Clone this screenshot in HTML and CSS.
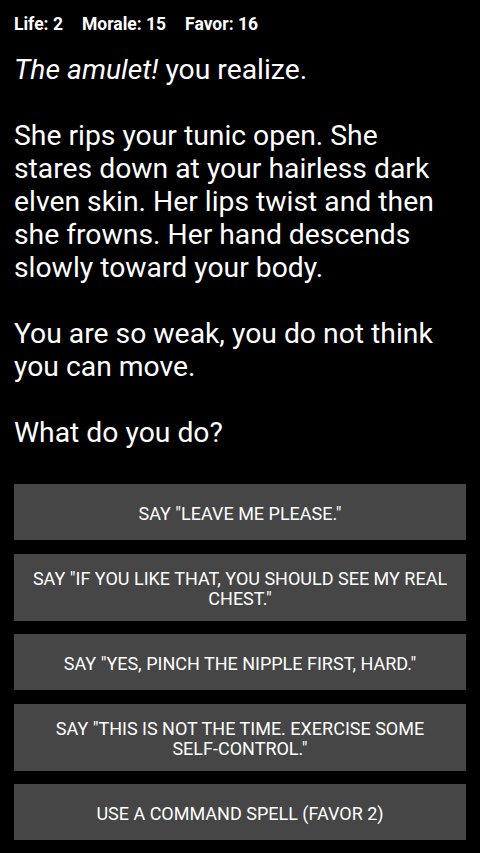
FILE: index.html
```html
<!DOCTYPE html>
<html>
<head>
<meta charset="utf-8">
<link rel="stylesheet" href="styles.css">
</head>
<body>
<div class="stats">
  <span>Life: 2</span>
  <span>Morale: 15</span>
  <span>Favor: 16</span>
</div>
<div class="story">
  <p><em>The amulet!</em> you realize.</p>
  <p>She rips your tunic open. She stares down at your hairless dark elven skin. Her lips twist and then she frowns. Her hand descends slowly toward your body.</p>
  <p>You are so weak, you do not think you can move.</p>
  <p>What do you do?</p>
</div>
<div class="choices">
  <button class="choice">SAY "LEAVE ME PLEASE."</button>
  <button class="choice">SAY "IF YOU LIKE THAT, YOU SHOULD SEE MY REAL CHEST."</button>
  <button class="choice">SAY "YES, PINCH THE NIPPLE FIRST, HARD."</button>
  <button class="choice">SAY "THIS IS NOT THE TIME. EXERCISE SOME <span class="nowrap">SELF-CONTROL."</span></button>
  <button class="choice">USE A COMMAND SPELL (FAVOR 2)</button>
</div>
</body>
</html>
```
FILE: styles.css
```css
html, body {
  margin: 0;
  padding: 0;
  background: #000;
  color: #fff;
  font-family: Roboto, "Noto Sans", sans-serif;
}
body {
  padding: 14px 14px 0 14px;
}
.stats {
  display: flex;
  gap: 19px;
  font-weight: bold;
  font-size: 17.5px;
  line-height: 20px;
}
.story {
  margin-top: 19px;
  padding-right: 18px;
  font-size: 28.3px;
  line-height: 33px;
}
.story p {
  margin: 0 0 33px 0;
}
.story p:last-child {
  margin-bottom: 0;
}
.story em {
  font-style: italic;
}
.choices {
  margin-top: 35px;
  display: flex;
  flex-direction: column;
  gap: 13.5px;
}
.choice {
  display: block;
  width: 100%;
  min-height: 56px;
  background: #464646;
  color: #fff;
  border: none;
  border-radius: 0;
  padding: 15px 16px 12px;
  font-family: Roboto, "Noto Sans", sans-serif;
  font-size: 18px;
  line-height: 20px;
  text-align: center;
}
.nowrap {
  white-space: nowrap;
}
```
